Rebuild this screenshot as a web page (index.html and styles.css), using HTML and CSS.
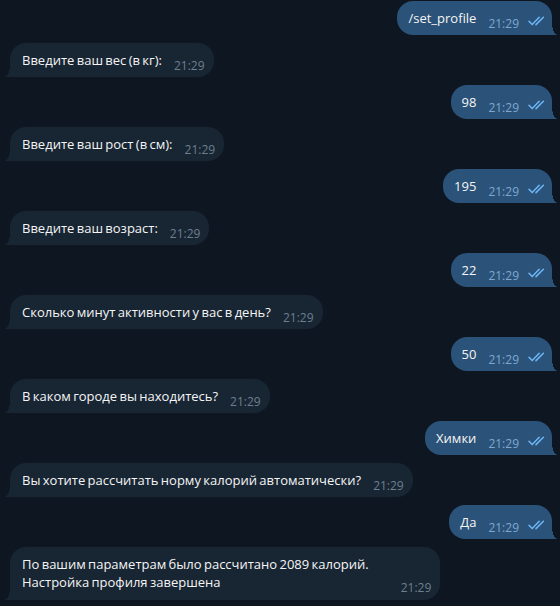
FILE: index.html
```html
<!DOCTYPE html>
<html lang="ru">
<head>
<meta charset="utf-8">
<link rel="stylesheet" href="styles.css">
</head>
<body>
<div class="chat">
  <div class="msg out"><span class="text">/set_profile</span><span class="time">21:29</span><svg class="check" viewBox="0 0 18 10" width="18" height="10"><path d="M1 5.2 L4.2 8.6 L11.2 1.2"/><path d="M8 8.6 L15.4 1.2"/></svg></div>
  <div class="msg in"><span class="text">Введите ваш вес (в кг):</span><span class="time">21:29</span></div>
  <div class="msg out"><span class="text">98</span><span class="time">21:29</span><svg class="check" viewBox="0 0 18 10" width="18" height="10"><path d="M1 5.2 L4.2 8.6 L11.2 1.2"/><path d="M8 8.6 L15.4 1.2"/></svg></div>
  <div class="msg in"><span class="text">Введите ваш рост (в см):</span><span class="time">21:29</span></div>
  <div class="msg out"><span class="text">195</span><span class="time">21:29</span><svg class="check" viewBox="0 0 18 10" width="18" height="10"><path d="M1 5.2 L4.2 8.6 L11.2 1.2"/><path d="M8 8.6 L15.4 1.2"/></svg></div>
  <div class="msg in"><span class="text">Введите ваш возраст:</span><span class="time">21:29</span></div>
  <div class="msg out"><span class="text">22</span><span class="time">21:29</span><svg class="check" viewBox="0 0 18 10" width="18" height="10"><path d="M1 5.2 L4.2 8.6 L11.2 1.2"/><path d="M8 8.6 L15.4 1.2"/></svg></div>
  <div class="msg in"><span class="text">Сколько минут активности у вас в день?</span><span class="time">21:29</span></div>
  <div class="msg out"><span class="text">50</span><span class="time">21:29</span><svg class="check" viewBox="0 0 18 10" width="18" height="10"><path d="M1 5.2 L4.2 8.6 L11.2 1.2"/><path d="M8 8.6 L15.4 1.2"/></svg></div>
  <div class="msg in"><span class="text">В каком городе вы находитесь?</span><span class="time">21:29</span></div>
  <div class="msg out"><span class="text">Химки</span><span class="time">21:29</span><svg class="check" viewBox="0 0 18 10" width="18" height="10"><path d="M1 5.2 L4.2 8.6 L11.2 1.2"/><path d="M8 8.6 L15.4 1.2"/></svg></div>
  <div class="msg in"><span class="text">Вы хотите рассчитать норму калорий автоматически?</span><span class="time">21:29</span></div>
  <div class="msg out"><span class="text">Да</span><span class="time">21:29</span><svg class="check" viewBox="0 0 18 10" width="18" height="10"><path d="M1 5.2 L4.2 8.6 L11.2 1.2"/><path d="M8 8.6 L15.4 1.2"/></svg></div>
  <div class="msg in multi"><span class="text">По вашим параметрам было рассчитано 2089 калорий.<br>Настройка профиля завершена</span><span class="time">21:29</span></div>
</div>
</body>
</html>
```

FILE: styles.css
```css
html, body {
  margin: 0;
  padding: 0;
  background: #0e1621;
  height: 100%;
}
body {
  font-family: "Open Sans", "Noto Sans", sans-serif;
  font-size: 13px;
  color: #f5f5f5;
}
.chat {
  display: flex;
  flex-direction: column;
  gap: 8px;
  padding: 1px 8px 0 10px;
}
.msg {
  position: relative;
  display: flex;
  align-items: flex-end;
  padding: 8px 9px 8px 12px;
  border-radius: 16px;
  line-height: 18px;
  max-width: 460px;
}
.msg .text {
  white-space: nowrap;
  word-spacing: -1px;
}
.msg .time {
  font-size: 12px;
  line-height: 14px;
  margin-left: 12px;
  margin-bottom: -4px;
}
.in {
  align-self: flex-start;
  background: #182533;
  border-bottom-left-radius: 0;
}
.in .time {
  color: #6d7f8f;
}
.in::before {
  content: "";
  position: absolute;
  left: -6px;
  bottom: 0;
  width: 6px;
  height: 12px;
  background: radial-gradient(ellipse 6px 12px at 0 0, transparent 98%, #182533 100%);
}
.out {
  align-self: flex-end;
  background: #2b5278;
  border-bottom-right-radius: 0;
  padding-right: 6px;
  padding-left: 11px;
}
.out .time {
  color: #7da8d3;
}
.out::after {
  content: "";
  position: absolute;
  right: -6px;
  bottom: 0;
  width: 6px;
  height: 12px;
  background: radial-gradient(ellipse 6px 12px at 100% 0, transparent 98%, #2b5278 100%);
}
.check {
  margin-left: 9px;
  margin-bottom: 1px;
  fill: none;
  stroke: #6cb6f5;
  stroke-width: 1.5;
  stroke-linecap: round;
  stroke-linejoin: round;
}
.multi {
  padding-bottom: 9px;
}
.in.multi .time {
  margin-left: 32px;
}
```
